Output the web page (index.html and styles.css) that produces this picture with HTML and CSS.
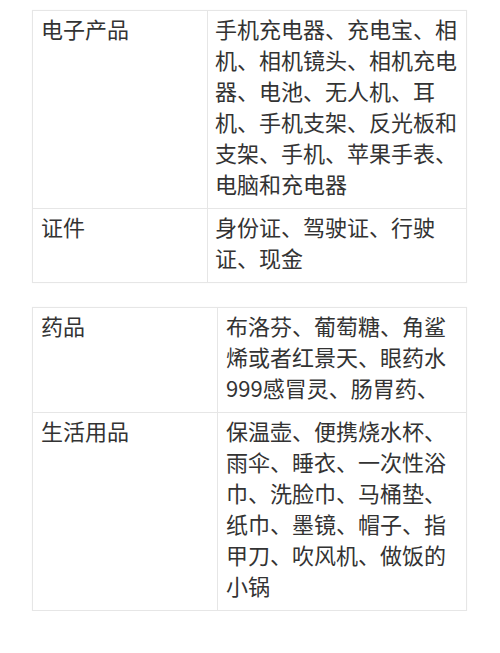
FILE: index.html
```html
<!DOCTYPE html>
<html lang="zh-CN">
<head>
<meta charset="utf-8">
<link rel="stylesheet" href="styles.css">
</head>
<body>
<div class="page">
  <table class="tbl tbl-a">
    <tr>
      <td class="k">电子产品</td>
      <td class="v">手机充电器、充电宝、相<br>机、相机镜头、相机充电<br>器、电池、无人机、耳<br>机、手机支架、反光板和<br>支架、手机、苹果手表、<br>电脑和充电器</td>
    </tr>
    <tr>
      <td class="k">证件</td>
      <td class="v">身份证、驾驶证、行驶<br>证、现金</td>
    </tr>
  </table>
  <table class="tbl tbl-b">
    <tr>
      <td class="k">药品</td>
      <td class="v">布洛芬、葡萄糖、角鲨<br>烯或者红景天、眼药水<br>999感冒灵、肠胃药、</td>
    </tr>
    <tr>
      <td class="k">生活用品</td>
      <td class="v">保温壶、便携烧水杯、<br>雨伞、睡衣、一次性浴<br>巾、洗脸巾、马桶垫、<br>纸巾、墨镜、帽子、指<br>甲刀、吹风机、做饭的<br>小锅</td>
    </tr>
  </table>
</div>
</body>
</html>
```
FILE: styles.css
```css
html, body {
  margin: 0;
  padding: 0;
  background: #ffffff;
}
.page {
  padding: 10px 0 0 32px;
  display: flex;
  flex-direction: column;
  gap: 24px;
  font-family: "Noto Sans CJK SC", "Noto Sans", sans-serif;
  color: #333333;
}
.tbl {
  width: 435px;
  border-collapse: collapse;
  table-layout: fixed;
  border: 1px solid #ececec;
  box-shadow: 0 0 1px rgba(0,0,0,0.06);
}
.tbl td {
  box-sizing: border-box;
  border: 1px solid #e6e6e6;
  vertical-align: top;
  font-size: 22px;
  line-height: 31px;
  padding: 2px 7px 9px 7px;
  white-space: nowrap;
}
.tbl .k {
  padding-left: 8px;
}
.tbl-a .k { width: 175px; }
.tbl-b .k { width: 185px; }
.tbl-b .v { padding-left: 8px; }
```
